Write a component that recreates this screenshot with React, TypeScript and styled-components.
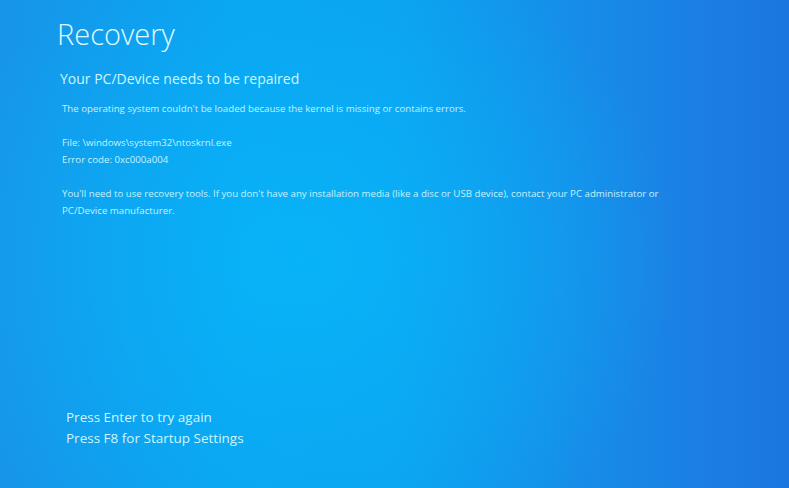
import React from "react";
import styled, { createGlobalStyle } from "styled-components";

const Global = createGlobalStyle`
  html, body { margin: 0; padding: 0; height: 100%; }
  body { overflow: hidden; }
  #root { height: 100%; }
`;

const Screen = styled.div`
  box-sizing: border-box;
  width: 789px;
  height: 488px;
  display: flex;
  flex-direction: column;
  padding: 14px 0 0 57px;
  font-family: "Open Sans", "Noto Sans", sans-serif;
  color: #c4f2ff;
  background:
    radial-gradient(ellipse 380px 330px at 300px 260px, rgba(8, 184, 250, 0.75), rgba(8, 184, 250, 0) 100%),
    linear-gradient(90deg, #1795e9 0%, #0aa4f1 30%, #0ca2f0 50%, #1590ea 70%, #1b80e4 87%, #1b76e0 100%);
`;

const Title = styled.h1`
  margin: 0;
  font-size: 29px;
  font-weight: 300;
  line-height: 40px;
  color: #e0fbff;
`;

const Subtitle = styled.h2`
  margin: 15px 0 0 3px;
  font-size: 14px;
  font-weight: 400;
  line-height: 20px;
  color: #cdf6ff;
`;

const Body = styled.div`
  margin: 11px 0 0 5px;
  display: flex;
  flex-direction: column;
  gap: 17px;
`;

const Para = styled.p`
  margin: 0;
  font-size: 9.7px;
  line-height: 17px;
  max-width: 640px;
`;

const Footer = styled.div`
  margin: auto 0 39px 9px;
  display: flex;
  flex-direction: column;
`;

const Hint = styled.div`
  font-size: 13.5px;
  line-height: 21px;
  color: #cdf6ff;
`;

export default function App() {
  return (
    <>
      <Global />
      <Screen>
        <Title>Recovery</Title>
        <Subtitle>Your PC/Device needs to be repaired</Subtitle>
        <Body>
          <Para>The operating system couldn't be loaded because the kernel is missing or contains errors.</Para>
          <Para>
            File: \windows\system32\ntoskrnl.exe
            <br />
            Error code: 0xc000a004
          </Para>
          <Para>
            You'll need to use recovery tools. If you don't have any installation media (like a disc or USB device), contact your PC administrator or
            <br />
            PC/Device manufacturer.
          </Para>
        </Body>
        <Footer>
          <Hint>Press Enter to try again</Hint>
          <Hint>Press F8 for Startup Settings</Hint>
        </Footer>
      </Screen>
    </>
  );
}
